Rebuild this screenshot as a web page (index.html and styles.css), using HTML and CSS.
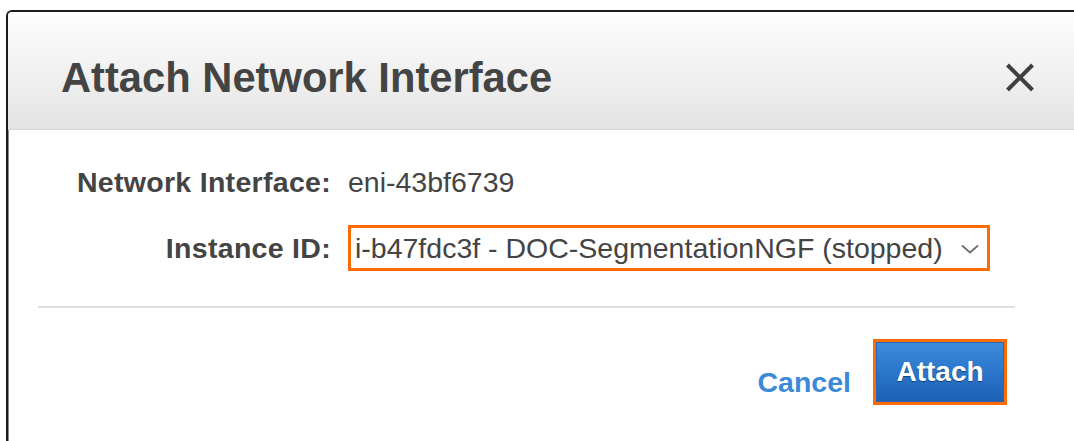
FILE: index.html
```html
<!DOCTYPE html>
<html lang="en">
<head>
<meta charset="utf-8">
<title>Attach Network Interface</title>
<link rel="stylesheet" href="styles.css">
</head>
<body>
  <div class="page">
    <div class="dialog">
      <div class="dialog-header">
        <h1 class="dialog-title">Attach Network Interface</h1>
        <button class="close" type="button" aria-label="Close">
          <svg width="28" height="29" viewBox="0 0 28 29">
            <path d="M1.5 2 L26.5 27 M26.5 2 L1.5 27" stroke="#3f3f3f" stroke-width="4" fill="none"/>
          </svg>
        </button>
      </div>
      <div class="dialog-body">
        <div class="form">
          <div class="label">Network Interface:</div>
          <div class="value">eni-43bf6739</div>
          <div class="label">Instance ID:</div>
          <div class="select">
            <span class="select-text">i-b47fdc3f - DOC-SegmentationNGF (stopped)</span>
            <svg class="chevron" width="20" height="12" viewBox="0 0 20 12">
              <path d="M2 2.5 L10 9.5 L18 2.5" stroke="#707070" stroke-width="1.8" fill="none"/>
            </svg>
          </div>
        </div>
        <div class="divider"></div>
        <div class="footer">
          <a class="cancel" href="#">Cancel</a>
          <button class="attach" type="button"><span>Attach</span></button>
        </div>
      </div>
    </div>
  </div>
</body>
</html>
```

FILE: styles.css
```css
html, body {
  margin: 0;
  padding: 0;
  background: #ffffff;
  overflow: hidden;
  height: 100%;
}

body {
  font-family: "Liberation Sans", Arial, sans-serif;
  color: #444444;
}

.page {
  padding: 10px 0 0 6px;
  height: 100%;
  box-sizing: border-box;
}

.dialog {
  width: 1090px;
  height: 431px;
  border-top: 2px solid #1c1c1c;
  border-left: 2px solid #1c1c1c;
  border-top-left-radius: 6px;
  background: #ffffff;
  box-shadow: inset 1px 1px 0 #8c8c8c;
  overflow: hidden;
}

.dialog-header {
  display: flex;
  align-items: flex-start;
  justify-content: space-between;
  height: 118px;
  box-sizing: border-box;
  padding: 0 64px 0 53px;
  background: linear-gradient(to bottom, #fefefe 0%, #f4f4f4 40%, #e4e4e4 100%);
  border-bottom: 1px solid #d6d6d6;
}

.dialog-title {
  margin: 45px 0 0 0;
  font-size: 41.7px;
  line-height: 1;
  font-weight: bold;
  color: #444444;
}

.close {
  margin-top: 51px;
  padding: 0;
  border: 0;
  background: none;
  display: block;
  cursor: pointer;
}

.close svg {
  display: block;
}

.dialog-body {
  padding: 38px 0 0 30px;
}

.form {
  display: grid;
  grid-template-columns: 293px auto;
  column-gap: 17px;
  row-gap: 29px;
  align-items: center;
  justify-content: start;
  font-size: 28.5px;
  line-height: 28px;
}

.label {
  text-align: right;
  font-weight: bold;
  letter-spacing: 0.3px;
  color: #444444;
}

.value {
  color: #444444;
}

.select {
  display: flex;
  align-items: center;
  justify-content: space-between;
  width: 642px;
  height: 46px;
  box-sizing: border-box;
  border: 3px solid #fb6b06;
  padding: 0 7px 0 4px;
  color: #444444;
  background: #ffffff;
}

.chevron {
  display: block;
  margin-top: 1px;
}

.divider {
  width: 977px;
  height: 2px;
  margin-top: 35px;
  background: #e0e0e0;
}

.footer {
  display: flex;
  justify-content: flex-end;
  align-items: flex-start;
  width: 977px;
  box-sizing: border-box;
  padding: 31px 8px 0 0;
  gap: 22px;
}

.cancel {
  margin-top: 29px;
  font-size: 28.5px;
  line-height: 28px;
  font-weight: bold;
  color: #3a8ad8;
  text-decoration: none;
}

.attach {
  display: block;
  padding: 0;
  border: 3px solid #fb6b06;
  background: none;
  font-family: inherit;
  cursor: pointer;
}

.attach span {
  display: block;
  width: 128px;
  height: 60px;
  box-sizing: border-box;
  padding-top: 16px;
  text-align: center;
  font-size: 28px;
  line-height: 28px;
  font-weight: bold;
  color: #ffffff;
  text-shadow: 0 1px 1px rgba(0, 0, 0, 0.45);
  background: linear-gradient(to bottom, #3e8cdc 0%, #2a76cb 50%, #1c60b4 100%);
  box-shadow: inset 0 0 0 1px #2a67b0;
}
```
